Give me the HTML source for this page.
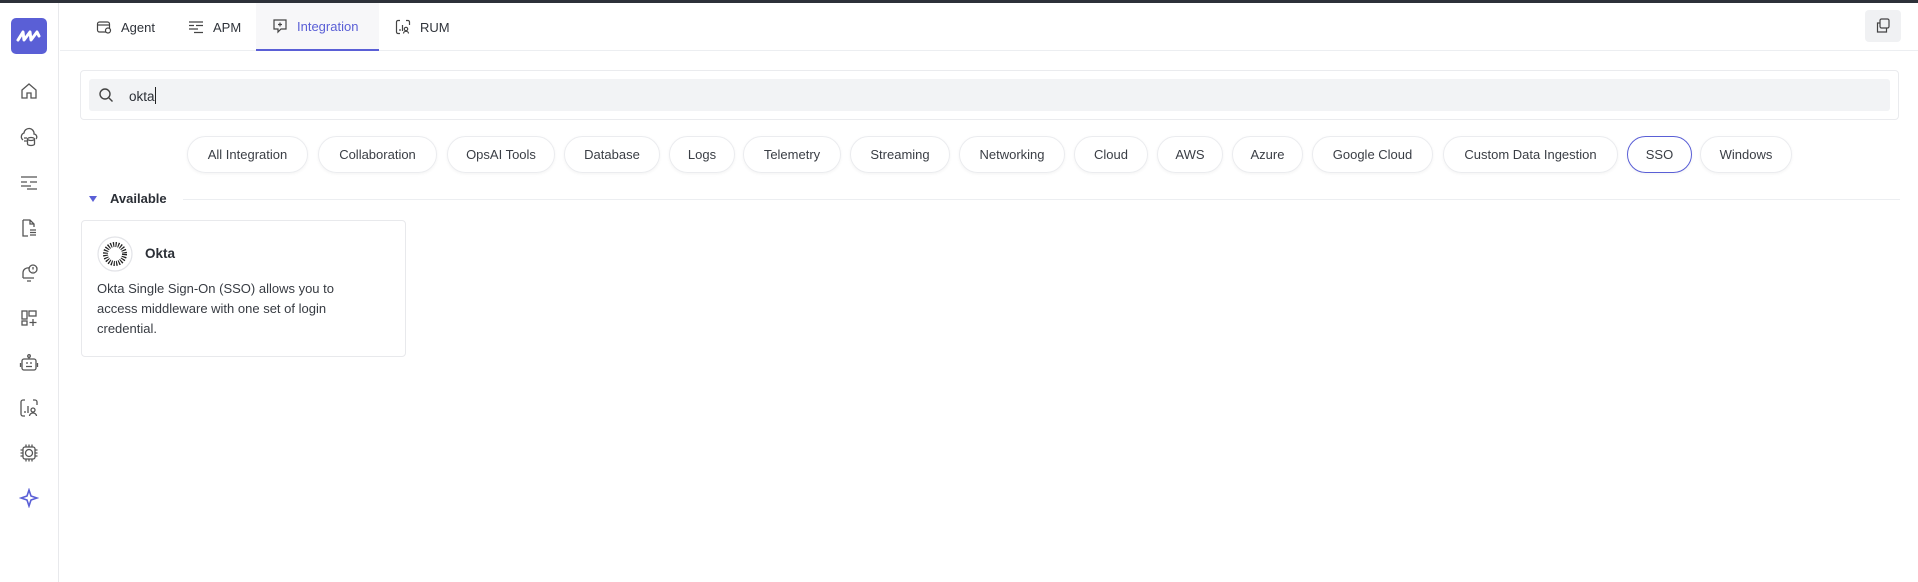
<!DOCTYPE html>
<html><head><meta charset="utf-8"><style>
*{box-sizing:border-box;margin:0;padding:0}
body{width:1918px;height:582px;overflow:hidden;background:#fff;font-family:"Liberation Sans",sans-serif;color:#2b2f36;position:relative}
.top{position:absolute;left:0;top:0;width:1918px;height:3px;background:#2d3139}
.side{position:absolute;left:0;top:3px;width:59px;height:579px;border-right:1px solid #e8e9ec}
.logo{position:absolute;left:11px;top:15px;width:36px;height:36px;border-radius:5px;background:#5a5fd6}
.si{position:absolute;left:19px;width:20px;height:20px}
.tabs{position:absolute;left:60px;top:3px;right:0;height:48px;border-bottom:1px solid #eceef1}
.tab{position:absolute;top:0;height:48px;display:flex;align-items:center;font-size:13px;color:#2f333a}
.tab svg{margin-right:9px}
.act{background:#f7f7f9;border-bottom:2px solid #5a5fd6;color:#5a5fd6}
.copy{position:absolute;left:1865px;top:10px;width:36px;height:32px;background:#f0f1f3;border-radius:4px}
.sbox{position:absolute;left:80px;top:70px;width:1819px;height:50px;border:1px solid #eaebee;border-radius:4px}
.sin{position:absolute;left:8px;top:8px;right:8px;height:32px;background:#f2f3f5;border-radius:3px}
.pills{position:absolute;top:136px;left:0}
.pill{position:absolute;top:0;height:37px;border:1px solid #ebecef;border-radius:19px;font-size:13px;color:#3a3e45;display:flex;align-items:center;justify-content:center;box-shadow:0 1px 3px rgba(0,0,0,.05);white-space:nowrap}
.sso{border-color:#5a5fd6}
.avail{position:absolute;left:110px;top:191px;font-size:13px;font-weight:bold;color:#2b2f36}
.card{position:absolute;left:81px;top:220px;width:325px;height:137px;border:1px solid #e8e9ec;border-radius:4px}
.desc{position:absolute;left:97px;top:279px;width:268px;font-size:13px;line-height:20px;color:#373b42}
</style></head><body>
<div class="top"></div>
<div class="side">
<div class="logo"><svg width="36" height="36" viewBox="0 0 36 36"><path d="M7 22 L12 14 L13 22 L19 14 L20 22 L26 14 L28 18" fill="none" stroke="#fff" stroke-width="3" stroke-linejoin="round" stroke-linecap="round"/></svg></div>
<svg class="si" style="top:78px" viewBox="0 0 20 20" fill="none" stroke="#555" stroke-width="1.3"><path d="M3 9 L10 3 L17 9 V17 H12 V12 H8 V17 H3Z"/></svg>
<svg class="si" style="top:124px" viewBox="0 0 20 20" fill="none" stroke="#555" stroke-width="1.3"><path d="M4 13 A4 4 0 0 1 5 6 A5 5 0 0 1 15 7 A3 3 0 0 1 17 12"/><ellipse cx="12" cy="12" rx="3.5" ry="1.5"/><path d="M8.5 12 V17 A3.5 1.5 0 0 0 15.5 17 V12"/><path d="M5 11 h3 M5 14 h3"/></svg>
<svg class="si" style="top:169px" viewBox="0 0 20 20" fill="none" stroke="#555" stroke-width="1.3"><path d="M2 5h16M2 10h6M11 10h7M2 14h10M8 17h10"/></svg>
<svg class="si" style="top:215px" viewBox="0 0 20 20" fill="none" stroke="#555" stroke-width="1.3"><path d="M4 2 H11 L15 6 V9 M4 2 V18 H9 M11 2 V6 H15 M11 12h6M11 14.5h6M11 17h6"/></svg>
<svg class="si" style="top:260px" viewBox="0 0 20 20" fill="none" stroke="#555" stroke-width="1.3"><path d="M4 15 V10 A5 5 0 0 1 10 5 M4 15 H15 M8 18 h4"/><circle cx="14" cy="6" r="4"/><path d="M14 4v2.5M14 8v.3"/></svg>
<svg class="si" style="top:305px" viewBox="0 0 20 20" fill="none" stroke="#555" stroke-width="1.3"><rect x="3" y="3" width="5" height="8"/><rect x="10" y="3" width="7" height="5"/><rect x="3" y="13" width="5" height="4"/><path d="M14 11v7M10.5 14.5h7"/></svg>
<svg class="si" style="top:350px" viewBox="0 0 20 20" fill="none" stroke="#555" stroke-width="1.3"><circle cx="10" cy="3" r="1.3"/><path d="M10 4.3V6"/><rect x="3" y="6" width="14" height="11" rx="2"/><path d="M7 10h2M11 10h2M7 13.5h6M1.5 10v4M18.5 10v4"/></svg>
<svg class="si" style="top:395px" viewBox="0 0 20 20" fill="none" stroke="#555" stroke-width="1.3"><path d="M6 2H4a2 2 0 0 0-2 2v12a2 2 0 0 0 2 2h2M14 2h2a2 2 0 0 1 2 2v3"/><path d="M6 13v2M9 8v7"/><circle cx="14" cy="12" r="2"/><path d="M10.5 18a3.5 3 0 0 1 7 0"/></svg>
<svg class="si" style="top:440px" viewBox="0 0 20 20" fill="none" stroke="#555" stroke-width="1.3"><rect x="4" y="4" width="12" height="12" rx="2"/><circle cx="10" cy="10" r="3.5"/><path d="M7 1.5v2.5M10 1.5v2.5M13 1.5v2.5M7 16v2.5M10 16v2.5M13 16v2.5M1.5 7h2.5M1.5 10h2.5M1.5 13h2.5M16 7h2.5M16 10h2.5M16 13h2.5"/></svg>
<svg class="si" style="top:485px" viewBox="0 0 20 20" fill="none" stroke="#5a5fd6" stroke-width="2" stroke-linecap="round"><path d="M10 2 L12 8 L18 10 L12 12 L10 18 L8 12 L2 10 L8 8Z" stroke-width="1.6"/></svg>
</div>
<div class="tabs">
<div class="tab" style="left:36px"><svg width="16" height="16" viewBox="0 0 16 16" fill="none" stroke="#444" stroke-width="1.2"><rect x="1.5" y="3" width="12" height="10" rx="2"/><path d="M1.5 6h12"/><circle cx="12" cy="11.5" r="2.5" fill="#fff"/></svg>Agent</div>
<div class="tab" style="left:128px"><svg width="16" height="16" viewBox="0 0 16 16" fill="none" stroke="#444" stroke-width="1.2"><path d="M1 3h14M1 6.5h5M8 6.5h7M1 10h9M6 13.5h9"/></svg>APM</div>
<div class="tab act" style="left:196px;width:123px;padding-left:16px"><svg width="16" height="16" viewBox="0 0 16 16" fill="none" stroke="#444" stroke-width="1.2"><path d="M2 2h12v9H9l-3 3v-3H2z"/><path d="M8 4.5v4M6 6.5h4"/></svg>Integration</div>
<div class="tab" style="left:335px"><svg width="16" height="16" viewBox="0 0 16 16" fill="none" stroke="#444" stroke-width="1.2"><path d="M5 1.5H3a1.5 1.5 0 0 0-1.5 1.5v10A1.5 1.5 0 0 0 3 14.5h2M11 1.5h2A1.5 1.5 0 0 1 14.5 3v3"/><path d="M5 10v2M7.5 6v6"/><circle cx="11" cy="10" r="1.7"/><path d="M8.5 14.5a2.5 2.2 0 0 1 5 0"/></svg>RUM</div>
</div>
<div class="copy"><svg width="36" height="32" viewBox="0 0 36 32" fill="none" stroke="#444" stroke-width="1.2"><rect x="15" y="9" width="9" height="9" rx="1.5"/><path d="M15 13h-2.5v9h9v-4"/></svg></div>
<div class="sbox"><div class="sin">
<svg style="position:absolute;left:9px;top:8px" width="16" height="16" viewBox="0 0 16 16" fill="none" stroke="#444" stroke-width="1.4"><circle cx="7" cy="7" r="5"/><path d="M11 11l3.5 3.5"/></svg>
<span style="position:absolute;left:40px;top:8px;font-size:13.5px;color:#2b2f36">okta<span style="display:inline-block;width:1px;height:17px;background:#222;vertical-align:-3px"></span></span>
</div></div>
<div class="pills">
<div class="pill" style="left:187px;width:121px">All Integration</div>
<div class="pill" style="left:318px;width:119px">Collaboration</div>
<div class="pill" style="left:447px;width:108px">OpsAI Tools</div>
<div class="pill" style="left:564px;width:96px">Database</div>
<div class="pill" style="left:669px;width:66px">Logs</div>
<div class="pill" style="left:743px;width:98px">Telemetry</div>
<div class="pill" style="left:850px;width:100px">Streaming</div>
<div class="pill" style="left:959px;width:106px">Networking</div>
<div class="pill" style="left:1074px;width:74px">Cloud</div>
<div class="pill" style="left:1157px;width:66px">AWS</div>
<div class="pill" style="left:1232px;width:71px">Azure</div>
<div class="pill" style="left:1312px;width:121px">Google Cloud</div>
<div class="pill" style="left:1443px;width:175px">Custom Data Ingestion</div>
<div class="pill sso" style="left:1627px;width:65px">SSO</div>
<div class="pill" style="left:1700px;width:92px">Windows</div>
</div>
<svg style="position:absolute;left:88px;top:195px" width="10" height="8" viewBox="0 0 10 8"><path d="M1 1h8L5 7z" fill="#5a5fd6"/></svg>
<div class="avail">Available</div>
<div style="position:absolute;left:183px;top:199px;width:1717px;height:1px;background:#eceef1"></div>
<div class="card"></div>
<svg style="position:absolute;left:97px;top:236px" width="36" height="36" viewBox="0 0 36 36"><circle cx="18" cy="18" r="17" fill="#fff" stroke="#e2e3e7" stroke-width="1.2"/><circle cx="18" cy="18" r="9.5" fill="none" stroke="#222" stroke-width="5" stroke-dasharray="1.2 1.3"/><circle cx="18" cy="18" r="6" fill="#fff"/></svg>
<div style="position:absolute;left:145px;top:246px;font-size:13.5px;font-weight:bold;color:#2b2f36">Okta</div>
<div class="desc">Okta Single Sign-On (SSO) allows you to access middleware with one set of login credential.</div>
</body></html>
